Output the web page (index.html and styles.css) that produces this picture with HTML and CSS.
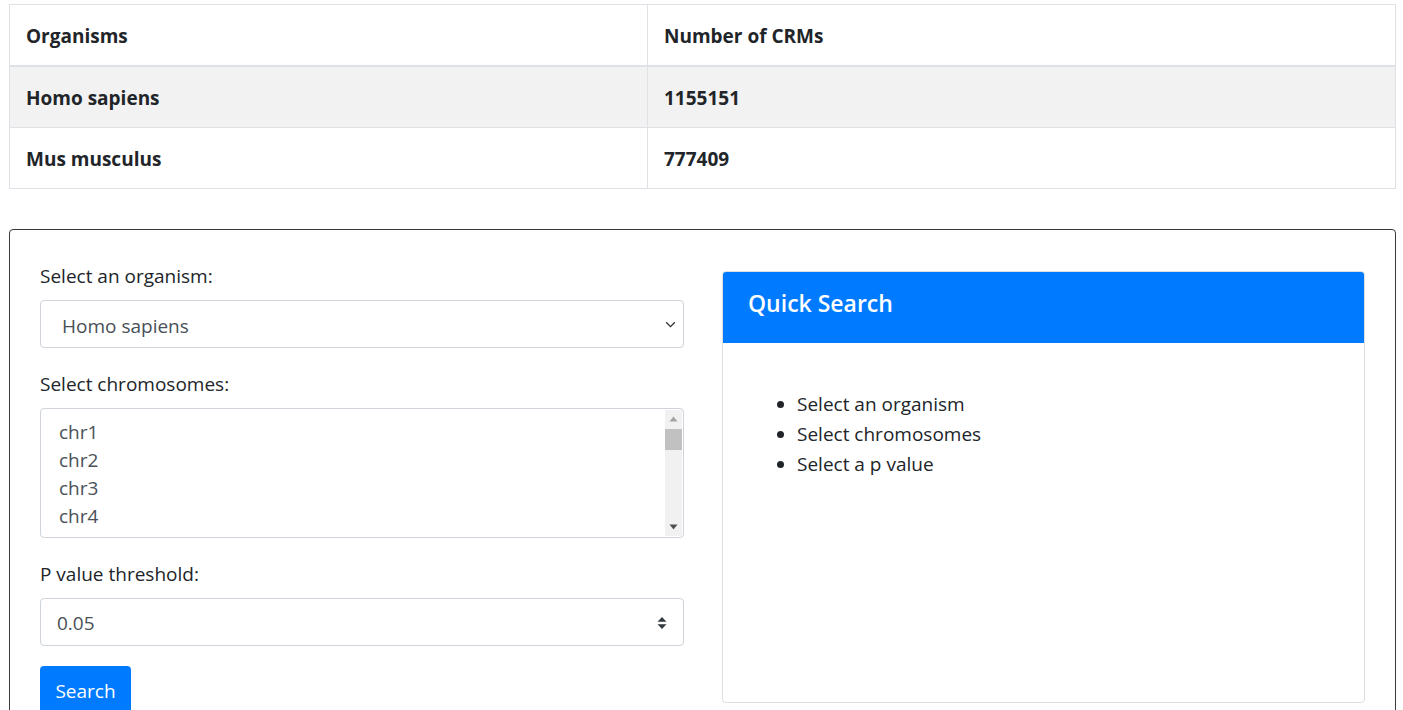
FILE: index.html
```html
<!DOCTYPE html>
<html>
<head>
<meta charset="utf-8">
<link rel="stylesheet" href="styles.css">
</head>
<body>
<table class="stats">
  <thead>
    <tr><th class="col-org">Organisms</th><th>Number of CRMs</th></tr>
  </thead>
  <tbody>
    <tr class="striped"><td>Homo sapiens</td><td>1155151</td></tr>
    <tr><td>Mus musculus</td><td>777409</td></tr>
  </tbody>
</table>

<div class="card">
  <div class="form-col">
    <div class="group">
      <div class="label">Select an organism:</div>
      <div class="select select-organism">
        <span class="select-text">Homo sapiens</span>
        <svg class="chev" width="11" height="7" viewBox="0 0 11 7"><path d="M1.2 1.3 L5.5 5.6 L9.8 1.3" fill="none" stroke="#333" stroke-width="1.3"/></svg>
      </div>
    </div>
    <div class="group">
      <div class="label">Select chromosomes:</div>
      <div class="listbox">
        <div class="options">
          <div class="opt">chr1</div>
          <div class="opt">chr2</div>
          <div class="opt">chr3</div>
          <div class="opt">chr4</div>
        </div>
        <div class="scrollbar">
          <svg width="9" height="6" viewBox="0 0 9 6" class="sb-arrow"><path d="M0.5 5.5 L4.5 0.5 L8.5 5.5 Z" fill="#a3a3a3"/></svg>
          <div class="thumb"></div>
          <div class="sb-space"></div>
          <svg width="9" height="6" viewBox="0 0 9 6" class="sb-arrow"><path d="M0.5 0.5 L8.5 0.5 L4.5 5.5 Z" fill="#505050"/></svg>
        </div>
      </div>
    </div>
    <div class="group group-last">
      <div class="label">P value threshold:</div>
      <div class="select select-p">
        <span class="select-text">0.05</span>
        <svg class="updown" width="10" height="14" viewBox="0 0 10 14"><path d="M5 1 L9.5 5.8 L0.5 5.8 Z M0.5 8.2 L9.5 8.2 L5 13 Z" fill="#343a40"/></svg>
      </div>
    </div>
    <div class="btn">Search</div>
  </div>

  <div class="panel">
    <div class="panel-head">Quick Search</div>
    <div class="panel-body">
      <ul class="steps">
        <li>Select an organism</li>
        <li>Select chromosomes</li>
        <li>Select a p value</li>
      </ul>
    </div>
  </div>
</div>
</body>
</html>
```

FILE: styles.css
```css
html, body {
  margin: 0;
  background: #fff;
}
body {
  padding: 4px 7px 0 9px;
  font-family: "Open Sans", "Noto Sans", sans-serif;
  color: #212529;
  overflow: hidden;
  height: 706px;
}
.stats {
  width: 100%;
  border-collapse: collapse;
  border: 1px solid #dee2e6;
  font-size: 19px;
  font-weight: 700;
}
.stats th, .stats td {
  text-align: left;
  padding: 19px 16px 17px 16px;
  line-height: 24px;
  border: 1px solid #dee2e6;
  font-weight: 700;
}
.stats thead th {
  border-bottom: 2px solid #dee2e6;
}
.stats .col-org {
  width: 605px;
}
.stats .striped td {
  background: #f2f2f2;
}

.card {
  margin-top: 40px;
  border: 1px solid #3a3a3a;
  border-radius: 4px;
  padding: 31px 30px 30px 30px;
  display: grid;
  grid-template-columns: 644px 1fr;
  column-gap: 38px;
  align-items: start;
  font-size: 19px;
}
.label {
  line-height: 30px;
  margin-bottom: 9px;
}
.group {
  margin-bottom: 21px;
}
.group-last {
  margin-bottom: 20px;
}
.select {
  height: 48px;
  box-sizing: border-box;
  border: 1px solid #ced4da;
  border-radius: 4px;
  display: flex;
  align-items: center;
  color: #495057;
}
.select-text {
  flex: 1;
}
.select-organism {
  padding: 3px 7px 0 21px;
}
.select-p {
  padding: 1px 16px 0 16px;
}
.chev {
  display: block;
  margin-top: -3px;
}
.updown {
  display: block;
}
.listbox {
  height: 130px;
  box-sizing: border-box;
  border: 1px solid #ced4da;
  border-radius: 4px;
  display: flex;
  overflow: hidden;
  color: #495057;
}
.options {
  flex: 1;
  padding: 9px 0 0 18px;
}
.opt {
  line-height: 28px;
}
.scrollbar {
  width: 17px;
  margin: 1px 1px 1px 0;
  background: #f1f1f1;
  display: flex;
  flex-direction: column;
  align-items: center;
}
.sb-arrow {
  display: block;
  margin: 6px 0;
}
.thumb {
  width: 17px;
  height: 21px;
  background: #c1c1c1;
  margin-top: 1px;
}
.sb-space {
  flex: 1;
}
.btn {
  display: inline-flex;
  align-items: center;
  justify-content: center;
  width: 91px;
  height: 50px;
  box-sizing: border-box;
  background: #007bff;
  color: #fff;
  border-radius: 4px;
}

.panel {
  margin-top: 10px;
  height: 432px;
  box-sizing: border-box;
  border: 1px solid rgba(0,0,0,0.125);
  border-radius: 4px;
  overflow: hidden;
}
.panel-head {
  background: #007bff;
  color: #fff;
  height: 71px;
  box-sizing: border-box;
  padding: 15px 0 0 25px;
  line-height: 32px;
  font-size: 23px;
  font-weight: 600;
}
.panel-body {
  padding: 46px 0 0 0;
}
.steps {
  margin: 0;
  padding-left: 74px;
}
.steps li {
  line-height: 30px;
}
```
